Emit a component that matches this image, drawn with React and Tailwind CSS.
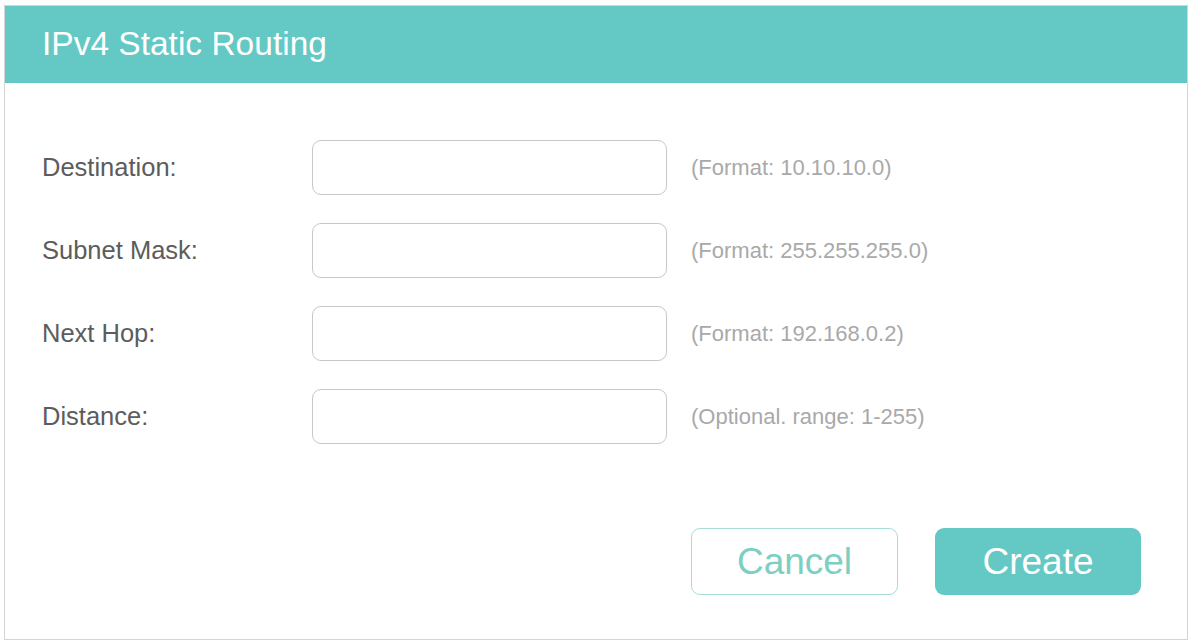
export default function App() {
  const rows = [
    { label: "Destination:", hint: "(Format: 10.10.10.0)" },
    { label: "Subnet Mask:", hint: "(Format: 255.255.255.0)" },
    { label: "Next Hop:", hint: "(Format: 192.168.0.2)" },
    { label: "Distance:", hint: "(Optional. range: 1-255)" },
  ];
  return (
    <div className="w-[1190px] h-[642px] bg-white overflow-hidden pl-[4px] pt-[5px]" style={{ fontFamily: '"Liberation Sans", Arial, sans-serif' }}>
      <div className="w-[1184px] h-[635px] border border-[#d4d4d4] flex flex-col">
        <div className="h-[77px] bg-[#64c9c5] flex items-center pl-[37px] shrink-0">
          <span className="text-[33.5px] text-white leading-none pb-[2px]">IPv4 Static Routing</span>
        </div>
        <div className="flex flex-col pl-[37px] pt-[57px] gap-[28px]">
          {rows.map((r) => (
            <div key={r.label} className="flex items-center h-[55px]">
              <div className="w-[270px] text-[25.5px] text-[#5c5c5c] leading-none">{r.label}</div>
              <div className="w-[355px] h-[55px] rounded-[9px] border-[1.5px] border-[#c8c8c8] bg-white"></div>
              <div className="ml-[24px] text-[22px] text-[#a9a9a9] leading-none">{r.hint}</div>
            </div>
          ))}
        </div>
        <div className="flex justify-end pr-[46px] pt-[84px] gap-[37px]">
          <button className="w-[207px] h-[67px] rounded-[9px] border-[1.5px] border-[#a6ddd6] bg-white text-[37px] text-[#7ccfc3] leading-none">Cancel</button>
          <button className="w-[206px] h-[67px] rounded-[9px] bg-[#64c9c5] text-[37px] text-white leading-none">Create</button>
        </div>
      </div>
    </div>
  );
}
